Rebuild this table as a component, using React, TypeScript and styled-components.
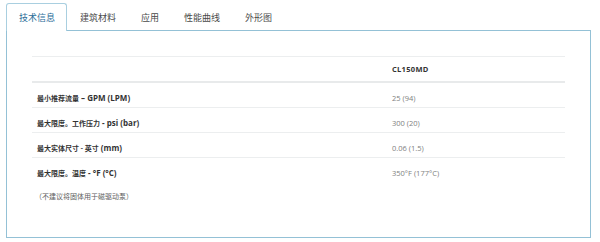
import React from 'react';
import styled, { createGlobalStyle } from 'styled-components';

interface SpecRow {
  label: string;
  unit: string;
  value: string;
}

const GlobalStyle = createGlobalStyle`
  html, body {
    margin: 0;
    padding: 0;
    background: #ffffff;
  }
`;

const Page = styled.div`
  width: 600px;
  height: 242px;
  padding: 3px 9px 0 6px;
  box-sizing: border-box;
  font-family: "Open Sans", "Noto Sans CJK SC", sans-serif;
`;

const TabBar = styled.div`
  display: flex;
  height: 27px;
  position: relative;
  z-index: 1;
`;

const Tab = styled.div<{ $active?: boolean }>`
  display: flex;
  align-items: center;
  padding: 0 11px 0 12px;
  font-family: "Noto Sans CJK SC", sans-serif;
  font-size: 9px;
  color: ${(p) => (p.$active ? '#2b6d98' : '#4a4a4a')};
  background: ${(p) => (p.$active ? '#fff' : 'transparent')};
  border: 1px solid ${(p) => (p.$active ? '#a9cfe0' : 'transparent')};
  border-bottom: none;
  border-radius: 3px 3px 0 0;
  height: ${(p) => (p.$active ? '28px' : '27px')};
  box-sizing: border-box;
`;

const Panel = styled.div`
  border: 1px solid #94c1d6;
  height: 208px;
  box-sizing: border-box;
  padding: 25px 25px 0 25px;
`;

const SpecTable = styled.table`
  width: 533px;
  border-collapse: collapse;
`;

const HeadCell = styled.th`
  height: 24px;
  padding: 0 5px;
  text-align: left;
  font-size: 7.5px;
  font-weight: 700;
  color: #333;
  border-top: 1px solid #eceeef;
  border-bottom: 2px solid #e8eaeb;
  letter-spacing: 0.3px;
  &:first-child {
    width: 345px;
  }
`;

const Cell = styled.td<{ $last?: boolean }>`
  height: 24px;
  padding: 0 5px;
  text-align: left;
  border-bottom: 1px solid ${(p) => (p.$last ? 'transparent' : '#eceeef')};
`;

const Label = styled.span`
  font-size: 8px;
  font-weight: 700;
  color: #333;
`;

const Cjk = styled.span`
  font-family: "Noto Sans CJK SC", sans-serif;
  font-size: 7px;
  font-weight: 700;
`;

const Value = styled.span`
  font-size: 7.5px;
  color: #808080;
`;

const Note = styled.div`
  margin: 8px 0 0 3px;
  font-family: "Noto Sans CJK SC", sans-serif;
  font-size: 7px;
  color: #5e5e5e;
`;

const rows: SpecRow[] = [
  { label: '最小推荐流量', unit: ' – GPM (LPM)', value: '25 (94)' },
  { label: '最大限度。工作压力', unit: ' - psi (bar)', value: '300 (20)' },
  { label: '最大实体尺寸 - 英寸', unit: ' (mm)', value: '0.06 (1.5)' },
  { label: '最大限度。温度', unit: ' - °F (°C)', value: '350°F (177°C)' },
];

const tabs = ['技术信息', '建筑材料', '应用', '性能曲线', '外形图'];

export default function App() {
  return (
    <>
      <GlobalStyle />
      <Page>
        <TabBar>
          {tabs.map((t, i) => (
            <Tab key={t} $active={i === 0}>
              {t}
            </Tab>
          ))}
        </TabBar>
        <Panel>
          <SpecTable>
            <thead>
              <tr>
                <HeadCell />
                <HeadCell>CL150MD</HeadCell>
              </tr>
            </thead>
            <tbody>
              {rows.map((r, i) => (
                <tr key={r.label}>
                  <Cell $last={i === rows.length - 1}>
                    <Label>
                      <Cjk>{r.label}</Cjk>
                      {r.unit}
                    </Label>
                  </Cell>
                  <Cell $last={i === rows.length - 1}>
                    <Value>{r.value}</Value>
                  </Cell>
                </tr>
              ))}
            </tbody>
          </SpecTable>
          <Note>（不建议将固体用于磁驱动泵）</Note>
        </Panel>
      </Page>
    </>
  );
}
